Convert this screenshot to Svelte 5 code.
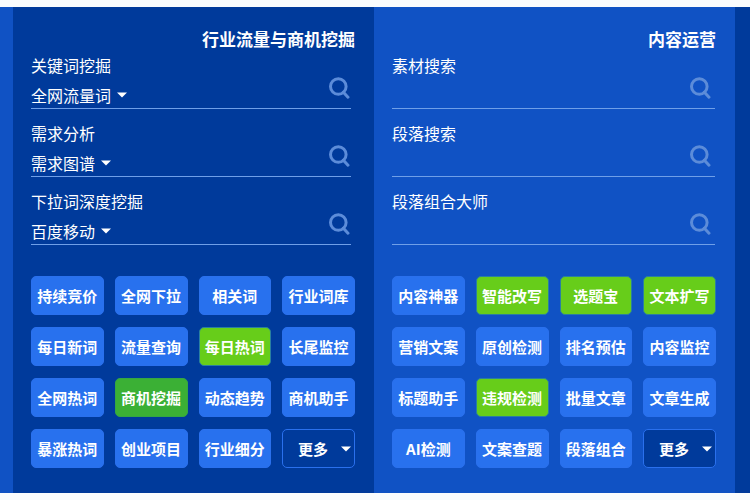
<script lang="ts">
    const panels = [
        {
            id: "traffic",
            title: "行业流量与商机挖掘",
            fields: [
                { label: "关键词挖掘", source: "全网流量词" },
                { label: "需求分析", source: "需求图谱" },
                { label: "下拉词深度挖掘", source: "百度移动" },
            ],
            tools: [
                { name: "持续竞价" },
                { name: "全网下拉" },
                { name: "相关词" },
                { name: "行业词库" },
                { name: "每日新词" },
                { name: "流量查询" },
                { name: "每日热词", tone: "lime" },
                { name: "长尾监控" },
                { name: "全网热词" },
                { name: "商机挖掘", tone: "green" },
                { name: "动态趋势" },
                { name: "商机助手" },
                { name: "暴涨热词" },
                { name: "创业项目" },
                { name: "行业细分" },
            ],
        },
        {
            id: "content",
            title: "内容运营",
            fields: [
                { label: "素材搜索" },
                { label: "段落搜索" },
                { label: "段落组合大师" },
            ],
            tools: [
                { name: "内容神器" },
                { name: "智能改写", tone: "lime" },
                { name: "选题宝", tone: "lime" },
                { name: "文本扩写", tone: "lime" },
                { name: "营销文案" },
                { name: "原创检测" },
                { name: "排名预估" },
                { name: "内容监控" },
                { name: "标题助手" },
                { name: "违规检测", tone: "lime" },
                { name: "批量文章" },
                { name: "文章生成" },
                { name: "AI检测" },
                { name: "文案查题" },
                { name: "段落组合" },
            ],
        },
    ];
</script>

{#snippet caret()}
    <svg class="caret" viewBox="0 0 10 6" aria-hidden="true">
        <path d="M0 0.5H10L5 5.5Z" fill="currentColor" />
    </svg>
{/snippet}

<main>
    {#each panels as panel (panel.id)}
        <section class="panel {panel.id}">
            <h2>{panel.title}</h2>

            <div class="fields">
                {#each panel.fields as field, i}
                    <div class="field">
                        <label for="{panel.id}-{i}">{field.label}</label>
                        <div class="row">
                            {#if field.source}
                                <div class="source">
                                    <select aria-label="{field.label}来源">
                                        <option>{field.source}</option>
                                    </select>
                                    {@render caret()}
                                </div>
                            {/if}
                            <input id="{panel.id}-{i}" type="text" />
                            <button class="search" aria-label="搜索">
                                <svg viewBox="0 0 21 22" aria-hidden="true">
                                    <circle cx="9.3" cy="9.5" r="7.8" />
                                    <path d="M14.4 15.2L19 20.2" />
                                </svg>
                            </button>
                        </div>
                    </div>
                {/each}
            </div>

            <div class="tools">
                {#each panel.tools as tool}
                    <button class="tool {tool.tone ?? ''}">{tool.name}</button>
                {/each}
                <button class="tool more">
                    <span>更多</span>
                    {@render caret()}
                </button>
            </div>
        </section>
    {/each}
</main>

<style>
    :global(body) {
        background: #fafcfe;
    }

    main {
        display: grid;
        grid-template-columns: 1fr 1fr;
        margin-top: 7px;
        padding: 0 15px 0 13px;
        background: linear-gradient(90deg, #1052c4 50%, #003a9b 50%);
        color: #fff;
        font-family: "Noto Sans CJK SC", sans-serif;
    }

    .panel {
        padding: 20px 19px 25px 18px;
        background: #003a9b;
    }

    .content {
        background: #1052c4;
    }

    h2 {
        margin: 0;
        font-size: 17px;
        line-height: 24px;
        font-weight: 700;
        text-align: right;
    }

    .fields {
        display: flex;
        flex-direction: column;
        gap: 10px;
        margin-right: 4px;
    }

    .content .fields {
        margin-right: 1px;
    }

    .field {
        border-bottom: 1px solid #6f9fe8;
    }

    label {
        display: block;
        height: 24px;
        font-size: 16px;
        line-height: 28px;
    }

    .row {
        display: flex;
        align-items: center;
        height: 33px;
    }

    .source {
        display: flex;
        align-items: center;
        gap: 6px;
        padding-top: 7px;
    }

    select,
    input,
    button {
        margin: 0;
        padding: 0;
        border: 0;
        background: none;
        color: inherit;
        font-family: inherit;
    }

    select {
        appearance: none;
        field-sizing: content;
        height: 24px;
        font-size: 16px;
        line-height: 24px;
    }

    input {
        flex: 1;
        min-width: 0;
        height: 24px;
        margin-left: 8px;
        font-size: 16px;
        outline: none;
    }

    .caret {
        flex: none;
        width: 10px;
        height: 6px;
    }

    .search {
        align-self: flex-start;
        margin: 2px 1px 0 0;
        cursor: pointer;
    }

    .content .search {
        margin-right: 4px;
    }

    .search svg {
        display: block;
        width: 21px;
        height: 22px;
        fill: none;
        stroke: #5c8cd9;
        stroke-width: 3;
        stroke-linecap: round;
    }

    .tools {
        display: grid;
        grid-template-columns: repeat(4, 1fr);
        gap: 12px 11px;
        margin-top: 31px;
    }

    .tool {
        height: 39px;
        border: 1px solid #2a70ed;
        border-radius: 5px;
        background: #2871ee;
        font-size: 15px;
        font-weight: 700;
        white-space: nowrap;
        cursor: pointer;
    }

    .lime {
        border-color: #2a7fa0;
        background: #67cd1a;
    }

    .green {
        border-color: #35a644;
        background: #3bb035;
    }

    .more {
        display: flex;
        align-items: center;
        padding: 0 3px 0 2px;
        background: #003a9b;
    }

    .more span {
        flex: 1;
    }
</style>
